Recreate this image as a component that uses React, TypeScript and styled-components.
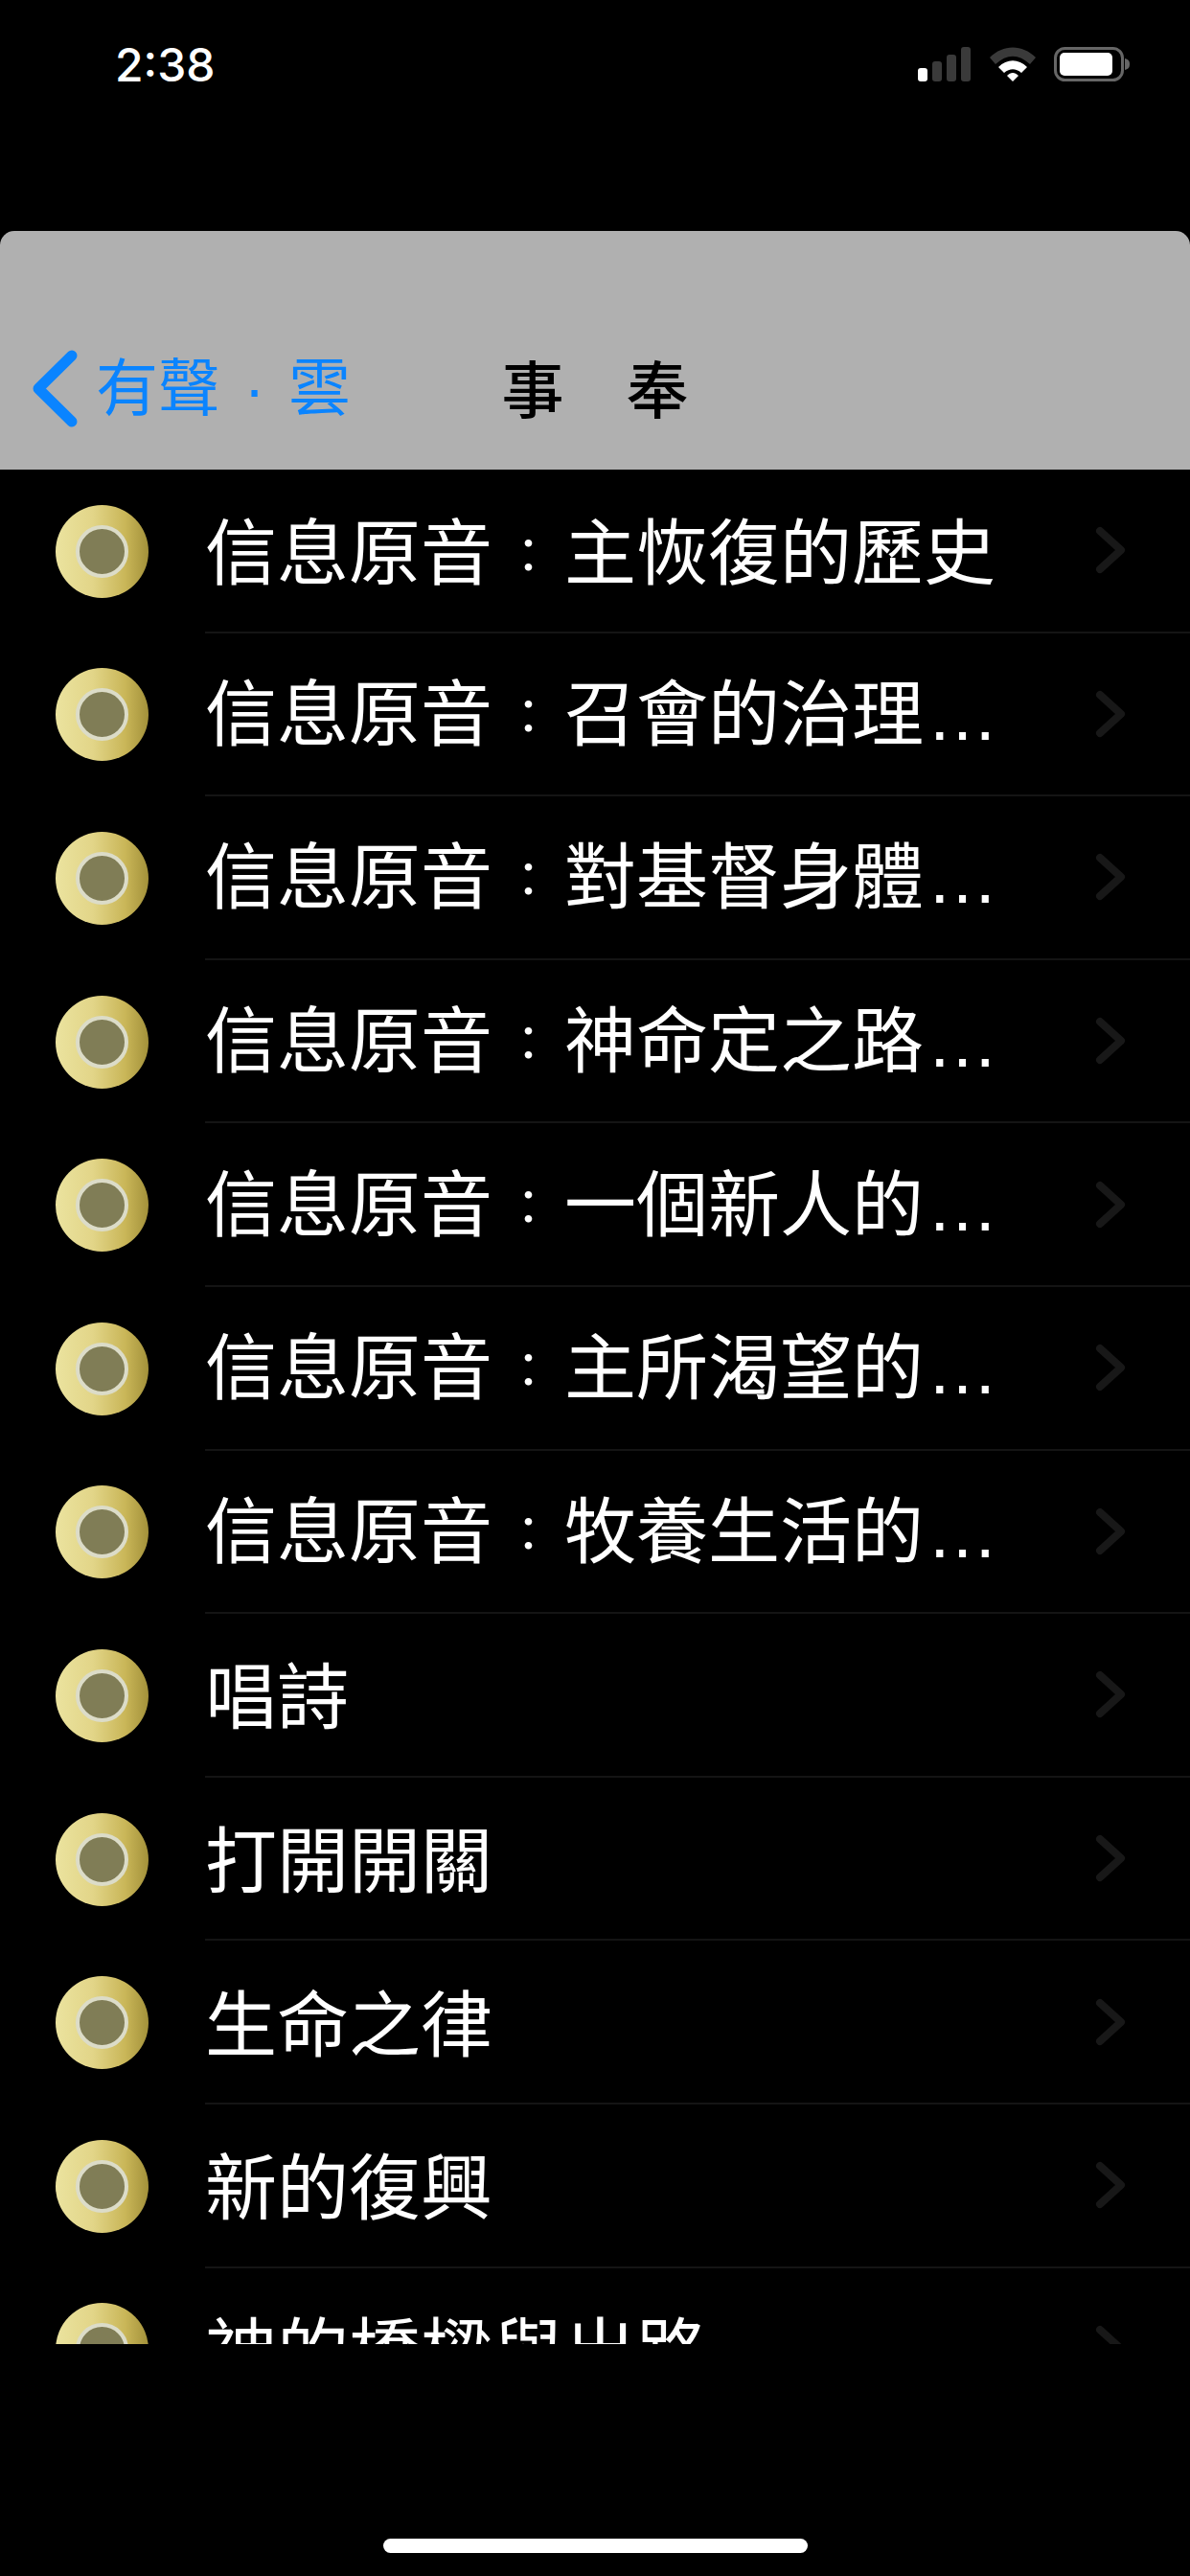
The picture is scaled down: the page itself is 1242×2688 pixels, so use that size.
import styled, { createGlobalStyle } from "styled-components";

type Item = {
  title: string;
  series?: boolean;
  cut?: boolean;
};

const items: Item[] = [
  { title: "主恢復的歷史", series: true },
  { title: "召會的治理", series: true, cut: true },
  { title: "對基督身體", series: true, cut: true },
  { title: "神命定之路", series: true, cut: true },
  { title: "一個新人的", series: true, cut: true },
  { title: "主所渴望的", series: true, cut: true },
  { title: "牧養生活的", series: true, cut: true },
  { title: "唱詩" },
  { title: "打開開關" },
  { title: "生命之律" },
  { title: "新的復興" },
  { title: "神的橋樑與出路" },
];

const GlobalStyle = createGlobalStyle`
  html, body {
    margin: 0;
    padding: 0;
    background: #000;
  }
  * {
    box-sizing: border-box;
  }
`;

const Screen = styled.div`
  width: 1242px;
  height: 2688px;
  background: #000;
  display: flex;
  flex-direction: column;
  overflow: hidden;
  font-family: "Noto Sans CJK TC", "Noto Sans", sans-serif;
`;

const StatusBar = styled.div`
  height: 241px;
  flex: none;
  display: flex;
  justify-content: space-between;
  align-items: flex-start;
  padding: 49px 62px 0 120px;
`;

const Time = styled.div`
  font-family: Inter, "Liberation Sans", sans-serif;
  font-size: 48px;
  font-weight: 500;
  line-height: 38px;
  color: #fff;
`;

const StatusIcons = styled.div`
  display: flex;
  align-items: flex-start;
  gap: 19px;
`;

const NavBar = styled.div`
  height: 249px;
  flex: none;
  background: #b0b0b0;
  border-radius: 15px 15px 0 0;
  display: grid;
  grid-template-columns: 1fr auto 1fr;
  align-items: center;
  padding-top: 80px;
`;

const BackLink = styled.div`
  display: flex;
  align-items: center;
  gap: 19px;
  padding-left: 34px;
  color: #0a84ff;
  font-size: 65px;
  line-height: 88px;
`;

const BackLabel = styled.span`
  padding-bottom: 6px;
`;

const BackDot = styled.span`
  display: inline-block;
  width: 71px;
  text-align: center;
  font-family: "Liberation Sans", sans-serif;
`;

const Title = styled.div`
  color: #000;
  font-size: 65px;
  font-weight: 500;
  line-height: 88px;
  padding-bottom: 6px;
`;

const List = styled.div`
  height: 1956px;
  flex: none;
  overflow: hidden;
`;

const Row = styled.div`
  height: 170.6px;
  display: flex;
  align-items: center;
  padding-left: 58px;
`;

const Medal = styled.div`
  width: 97px;
  height: 97px;
  flex: none;
  border-radius: 50%;
  background: linear-gradient(90deg, #ebe39f 0%, #e2d588 40%, #c9b658 75%, #a3913a 100%);
  display: flex;
  align-items: center;
  justify-content: center;
`;

const MedalCore = styled.div`
  width: 55px;
  height: 55px;
  border-radius: 50%;
  border: 4px solid #dcdcc8;
  background: #807d56;
`;

const RowBody = styled.div`
  flex: 1;
  height: 100%;
  margin-left: 59px;
  display: flex;
  align-items: center;
  justify-content: space-between;
  padding-right: 67px;
  border-bottom: 2px solid #141414;
`;

const RowText = styled.div`
  color: #fff;
  font-size: 75px;
  font-weight: 400;
  line-height: 100px;
  white-space: nowrap;
  padding-bottom: 4px;
`;

const Colon = styled.span`
  display: inline-block;
  width: 75px;
  text-align: center;
  font-size: 50px;
  line-height: 50px;
  vertical-align: 6px;
`;

const Dots = styled.span`
  margin-left: 3px;
  font-family: "Liberation Sans", sans-serif;
`;

const Footer = styled.div`
  flex: 1;
  display: flex;
  align-items: flex-end;
  justify-content: center;
  padding-bottom: 24px;
`;

const HomeBar = styled.div`
  width: 443px;
  height: 15px;
  border-radius: 8px;
  background: #fff;
`;

const SignalIcon = () => (
  <svg width="56" height="36" viewBox="0 0 56 36">
    <rect x="0" y="22" width="10" height="14" rx="3" fill="#fff" />
    <rect x="15" y="15" width="10" height="21" rx="3" fill="#3a3a3a" />
    <rect x="30" y="8" width="10" height="28" rx="3" fill="#3a3a3a" />
    <rect x="45" y="0" width="10" height="36" rx="3" fill="#3a3a3a" />
  </svg>
);

const WifiIcon = () => (
  <svg width="48" height="36" viewBox="0 0 48 36">
    <path d="M0 11 C14 -3 34 -3 48 11 L42 18 C30 7 18 7 6 18 Z" fill="#3a3a3a" />
    <path d="M9 21 C18 12 30 12 39 21 L33 27 C27 22 21 22 15 27 Z" fill="#fff" />
    <path d="M18 30 C22 26 26 26 30 30 L24 36 Z" fill="#fff" />
  </svg>
);

const BatteryIcon = () => (
  <svg width="80" height="36" viewBox="0 0 80 36">
    <rect x="1.5" y="1.5" width="70" height="33" rx="10" fill="none" stroke="#666" strokeWidth="3" />
    <rect x="6" y="6" width="55" height="24" rx="5" fill="#fff" />
    <path d="M74 12 C78 13 79 15 79 18 C79 21 78 23 74 24 Z" fill="#666" />
  </svg>
);

const BackChevron = () => (
  <svg width="47" height="81" viewBox="0 0 47 81">
    <path d="M41 6 L6 40.5 L41 75" fill="none" stroke="#0a84ff" strokeWidth="11" strokeLinecap="round" strokeLinejoin="round" />
  </svg>
);

const RowChevron = () => (
  <svg width="32" height="50" viewBox="0 0 32 50">
    <path d="M5 5 L27 25 L5 45" fill="none" stroke="#181818" strokeWidth="8" strokeLinecap="round" strokeLinejoin="round" />
  </svg>
);

export default function App() {
  return (
    <Screen>
      <GlobalStyle />
      <StatusBar>
        <Time>2:38</Time>
        <StatusIcons>
          <SignalIcon />
          <WifiIcon />
          <BatteryIcon />
        </StatusIcons>
      </StatusBar>
      <NavBar>
        <BackLink>
          <BackChevron />
          <BackLabel>
            有聲<BackDot>·</BackDot>雲
          </BackLabel>
        </BackLink>
        <Title>事　奉</Title>
      </NavBar>
      <List>
        {items.map((item) => (
          <Row key={item.title}>
            <Medal>
              <MedalCore />
            </Medal>
            <RowBody>
              <RowText>
                {item.series && (
                  <>
                    信息原音<Colon>：</Colon>
                  </>
                )}
                {item.title}
                {item.cut && <Dots>…</Dots>}
              </RowText>
              <RowChevron />
            </RowBody>
          </Row>
        ))}
      </List>
      <Footer>
        <HomeBar />
      </Footer>
    </Screen>
  );
}
